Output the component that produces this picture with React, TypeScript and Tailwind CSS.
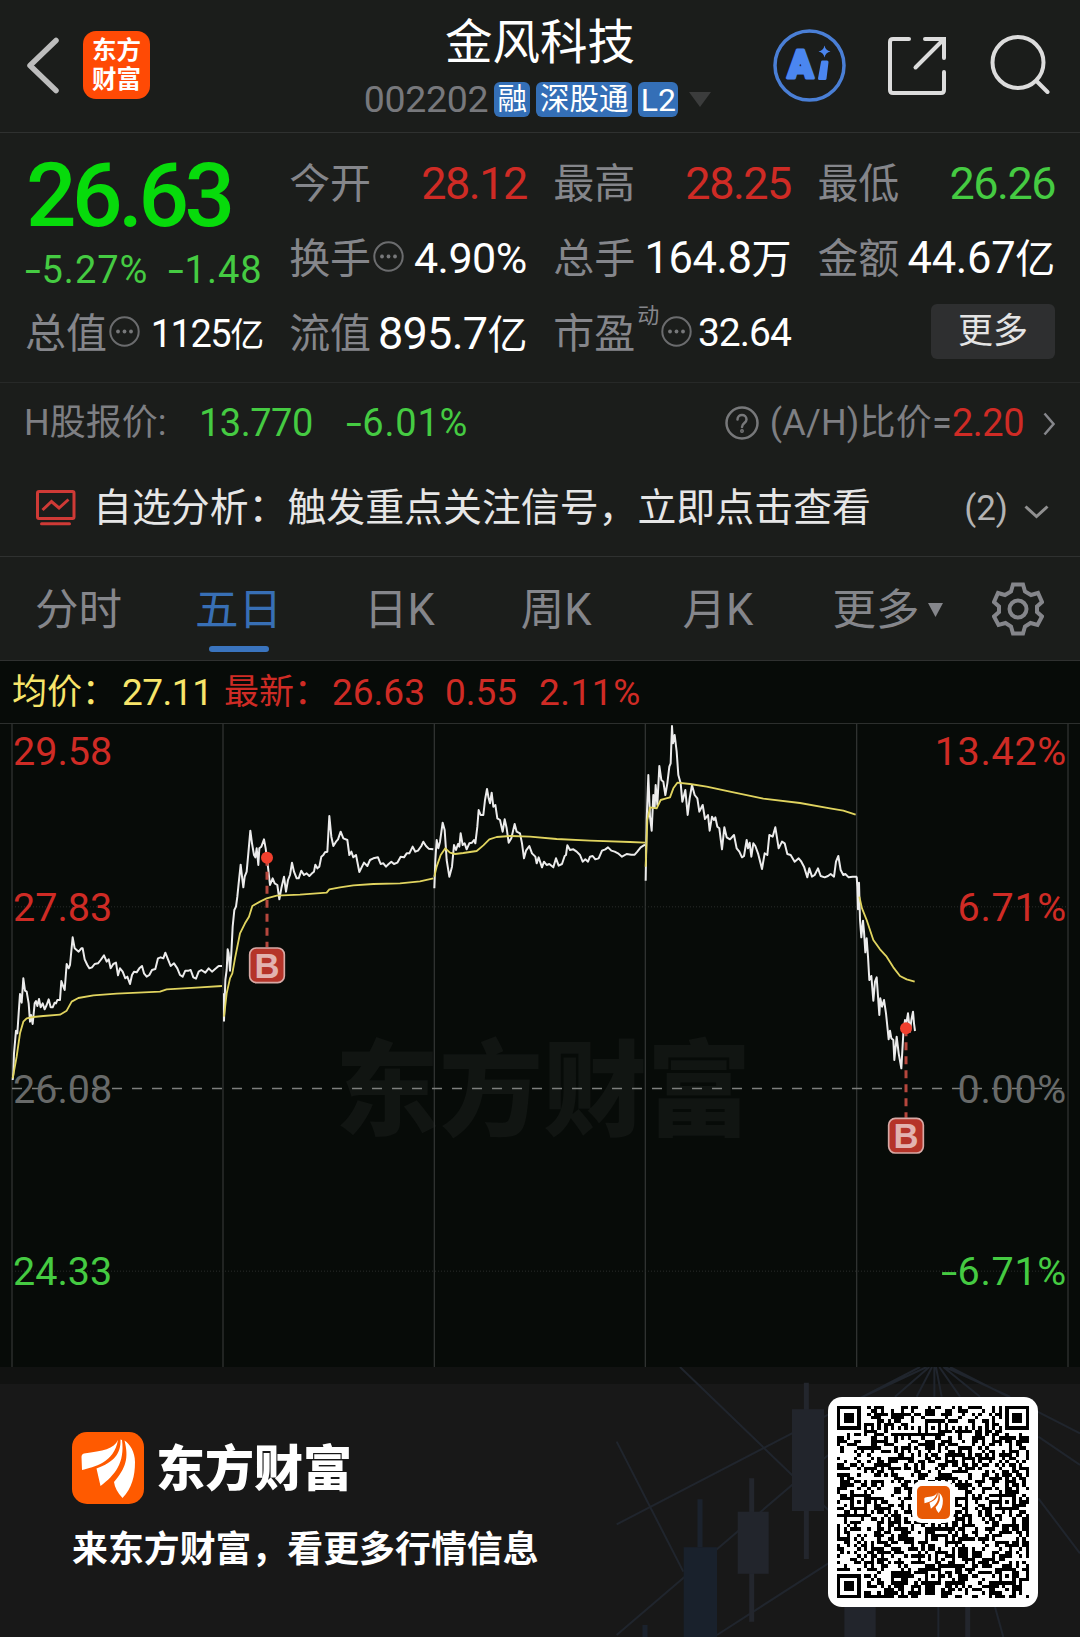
import type { ReactNode } from 'react';
import clsx from 'clsx';

const TABS = ['分时', '五日', '日K', '周K', '月K'];

// x,y pairs per trading day, in thirds of a pixel of the chart area
const SESSIONS = [
  {
    offset: [0, 0],
    price:
      '38,1080 40,1060 42,1000 48,932 52,940 56,880 60,822 65,848 70,775 75,812 80,815 86,850 90,905 93,885 98,912 104,850 108,843 112,858 117,837 122,862 128,850 134,868 140,855 146,838 152,862 158,862 164,848 168,850 172,840 180,840 184,783 190,800 194,810 200,732 206,745 210,735 218,652 224,685 230,690 236,695 244,685 248,685 254,718 262,735 268,745 276,742 284,732 294,730 302,720 312,706 320,725 326,718 332,745 340,732 348,728 354,766 360,745 368,755 376,775 382,770 390,792 396,765 402,755 410,757 418,745 426,738 432,760 440,770 448,765 456,750 466,747 474,715 482,712 490,715 496,698 504,718 512,738 522,730 532,745 540,765 548,770 556,752 566,752 572,750 580,772 588,776 596,755 604,750 616,758 626,745 636,755 648,745 656,738 666,738',
    average:
      '38,1075 50,1010 60,940 70,905 80,895 100,891 130,888 180,884 200,872 215,845 235,834 280,826 350,821 480,815 500,808 600,802 666,798',
  },
  {
    offset: [0, 0],
    price:
      '672,820 672,902 676,780 680,750 683,688 686,700 690,752 694,700 698,620 703,570 708,560 712,530 716,490 722,434 727,478 730,502 734,470 740,455 745,400 751,332 756,370 762,405 766,412 770,385 775,435 778,385 784,380 792,358 797,385 802,425 805,450 810,495 818,475 824,490 832,495 838,538 844,505 852,470 858,515 864,480 870,465 876,428 882,455 890,475 896,475 904,452 912,465 920,460 928,468 936,460 942,455 946,434 952,445 958,440 964,410 970,405 975,397 982,395 988,288 994,350 1000,378 1008,365 1014,358 1022,335 1030,355 1042,360 1048,405 1054,395 1060,412 1068,405 1078,456 1086,440 1092,428 1102,438 1110,420 1120,415 1134,412 1142,432 1150,430 1158,440 1166,432 1174,425 1182,432 1192,428 1202,410 1212,412 1220,400 1228,400 1238,380 1246,395 1254,392 1264,378 1270,365 1278,378 1286,386 1300,388',
    average:
      '672,890 680,820 690,775 697,760 705,715 720,640 735,610 747,590 757,558 780,545 800,535 830,527 900,524 980,518 988,508 1020,502 1060,496 1120,492 1200,490 1260,484 1300,475',
  },
  {
    offset: [1290, 0],
    price:
      '13,505 16,420 20,360 25,385 30,365 38,308 44,330 50,420 58,470 66,440 72,375 78,390 84,372 88,380 92,340 98,375 104,370 110,388 118,370 126,368 132,360 136,370 142,320 146,270 152,285 160,285 165,240 171,207 176,235 180,250 185,218 190,260 196,255 202,295 210,300 218,335 224,298 230,325 236,368 244,355 254,312 260,335 270,340 276,370 282,415 288,392 298,378 306,400 316,410 320,430 326,412 336,442 342,425 350,435 358,432 370,442 378,415 386,437 396,432 404,408 408,405 412,376 420,390 430,388 440,395 450,405 458,425 466,418 474,425 480,410 488,408 496,418 506,415 516,392 526,388 534,382 544,392 554,395 564,400 576,410 590,402 604,404 614,404 622,395 632,382 645,374',
    average:
      '13,470 20,440 32,405 46,385 60,398 75,402 100,399 140,393 160,376 178,358 200,351 240,348 300,350 380,357 480,362 600,366 645,368',
  },
  {
    offset: [1290, 0],
    price:
      '647,482 650,300 655,165 660,290 665,332 670,225 674,262 677,195 682,255 688,138 694,180 700,185 706,225 712,190 718,140 722,130 726,18 729,70 734,45 740,95 745,165 752,190 757,245 766,210 773,285 779,235 786,195 794,225 802,235 808,275 818,255 825,297 834,285 839,332 846,290 852,300 856,292 862,320 868,325 876,388 883,322 890,352 900,358 912,345 920,385 928,395 936,412 942,408 950,360 954,385 959,368 964,410 970,370 976,378 984,400 996,447 1004,400 1012,405 1018,345 1028,350 1036,322 1046,385 1056,365 1064,370 1072,402 1082,405 1094,425 1106,415 1114,425 1122,440 1132,472 1138,445 1146,470 1154,465 1164,445 1172,468 1184,472 1194,468 1202,462 1212,470 1218,425 1225,408 1232,450 1240,465 1246,462 1256,472 1268,470 1281,470',
    average:
      '647,440 652,300 660,262 680,265 692,240 706,236 720,232 730,205 742,188 780,192 830,200 900,215 1000,236 1110,249 1200,265 1240,272 1277,284',
  },
  {
    offset: [2520, 420],
    price:
      '50,50 52,80 54,148 57,68 60,180 64,232 69,182 72,215 76,277 80,235 84,290 88,360 94,348 100,422 105,365 110,352 118,465 121,415 126,440 132,420 138,460 146,538 150,512 154,535 160,540 163,600 170,530 176,580 184,625 190,520 195,480 199,490 204,460 210,515 214,480 219,455 222,490 225,513',
    average: '58,110 66,145 80,180 100,240 120,268 140,290 160,322 180,348 200,358 224,365',
  },
];

const TRADES = [
  { x: 801, y: 413, boxY: 682 },
  { x: 2718, y: 925, boxY: 1193 },
];

const QR_SIZE = 57;

function buildQr() {
  let seed = 20220;
  const rand = () => {
    seed = (seed * 1103515245 + 12345) % 2147483648;
    return seed / 2147483648;
  };
  const grid = Array.from({ length: QR_SIZE }, () =>
    Array.from({ length: QR_SIZE }, () => rand() > 0.5),
  );
  const last = QR_SIZE - 7;
  for (let i = 8; i < QR_SIZE - 8; i++) {
    grid[6][i] = i % 2 === 0;
    grid[i][6] = i % 2 === 0;
  }
  // finder patterns with their quiet ring
  [[0, 0], [last, 0], [0, last]].forEach(([cx, cy]) => {
    for (let y = -1; y <= 7; y++) {
      for (let x = -1; x <= 7; x++) {
        if (grid[cy + y]?.[cx + x] === undefined) continue;
        const d = Math.max(Math.abs(x - 3), Math.abs(y - 3));
        grid[cy + y][cx + x] = d !== 2 && d !== 4;
      }
    }
  });
  // alignment patterns
  [[28, 6], [6, 28], [28, 28], [50, 28], [28, 50], [50, 50]].forEach(([cx, cy]) => {
    for (let y = -2; y <= 2; y++) {
      for (let x = -2; x <= 2; x++) {
        grid[cy + y][cx + x] = Math.max(Math.abs(x), Math.abs(y)) !== 1;
      }
    }
  });
  return grid
    .flatMap((row, y) => row.map((on, x) => (on ? `M${x} ${y}h1v1h-1z` : '')))
    .join('');
}

const QR_PATH = buildQr();

function BrandMark({ className }: { className: string }) {
  return (
    <svg viewBox="0 0 72 72" className={className}>
      <path d="M46 8C42 17 31 19 12 21.500Q9.500 22 9.500 25L10 38C22 35 42 31 46 8Z" fill="#fff" />
      <path d="M48.500 7.500C49 22 42 30 24.500 36.500L28.500 54C43 43 53 31 50 8Z" fill="#fff" />
      <path d="M52.500 8.500C57 26 54 36 42 50Q43 58 50.500 66C60 56 63 44 63 30C63 20 58 12 52.500 8.500Z" fill="#fff" />
    </svg>
  );
}

function MoreDots() {
  return (
    <svg width="31" height="31" viewBox="0 0 31 31" className="mb-[4px] shrink-0">
      <circle cx="15.500" cy="15.500" r="14.200" fill="none" stroke="#6b6c6e" strokeWidth="2" />
      <circle cx="9" cy="15.500" r="1.900" fill="#77787a" />
      <circle cx="15.500" cy="15.500" r="1.900" fill="#77787a" />
      <circle cx="22" cy="15.500" r="1.900" fill="#77787a" />
    </svg>
  );
}

// negative number with a wide minus
function Signed({ value }: { value: string }) {
  if (!value.startsWith('-')) return <>{value}</>;
  return (
    <>
      <span className="mr-[5px] inline-block origin-left scale-x-150">-</span>
      {value.slice(1)}
    </>
  );
}

function Stat({ label, dots, children }: { label: string; dots?: boolean; children: ReactNode }) {
  return (
    <div className="flex h-[75px] items-center justify-between whitespace-nowrap">
      <div className="flex items-center gap-[2px]">
        <span className="pt-[2px] text-[41px] text-[#85868b]">{label}</span>
        {dots && <MoreDots />}
      </div>
      {children}
    </div>
  );
}

function Header() {
  return (
    <header className="grid h-[133px] grid-cols-[1fr_auto_1fr] border-b border-[#2f3130]">
      <div className="flex items-start pt-[31px] pl-[26px]">
        <svg width="34" height="68" viewBox="0 0 34 68" className="mr-[23px]">
          <path d="M30 9.500L4 34.500L30 59.500" fill="none" stroke="#bdbdbd" strokeWidth="5.500" strokeLinecap="round" strokeLinejoin="round" />
        </svg>
        <div className="flex h-[68px] w-[67px] flex-col items-center justify-center rounded-[13px] bg-[#ff4a05] text-[24.5px] leading-[29px] font-bold text-white">
          <span>东方</span>
          <span>财富</span>
        </div>
      </div>
      <div className="flex flex-col items-center pt-[14px]">
        <h1 className="text-[47.5px] leading-[58px] text-white">金风科技</h1>
        <div className="mt-[10px] flex h-[35px] items-center gap-[6px] pr-[5px] text-[29.5px] text-white">
          <span className="text-[37.5px] tracking-[-0.300px] text-[#77787c]">002202</span>
          <span className="flex h-[35px] w-[36px] items-center justify-center rounded-[6px] bg-[#346fb7] pt-px">融</span>
          <span className="flex h-[35px] w-[96px] items-center justify-center rounded-[6px] bg-[#346fb7] pt-px">深股通</span>
          <span className="flex h-[35px] w-[40px] items-center justify-center rounded-[6px] bg-[#346fb7] text-[32px]">L2</span>
          <svg width="22" height="15" viewBox="0 0 22 15" className="ml-[5px]">
            <path d="M0 0H22L11 15Z" fill="#3b3c3c" />
          </svg>
        </div>
      </div>
      <div className="flex items-start justify-end pt-[29px] pr-[30px]">
        <svg width="73" height="73" viewBox="0 0 73 73" className="mr-[42px]">
          <circle cx="36.500" cy="36.500" r="34.500" fill="none" stroke="#4a7fd6" strokeWidth="3.500" />
          <g fill="#4b86f0" stroke="#4b86f0" strokeLinejoin="round">
            <text x="14.500" y="49" strokeWidth="3" className="text-[38px] font-black">
              A
            </text>
            <path d="M49.500 33H54L52 49.500H46.500Z" strokeWidth="3" />
          </g>
          <path d="M51.500 16.500Q52.500 21.500 57.500 22.500Q52.500 23.500 51.500 28.500Q50.500 23.500 45.500 22.500Q50.500 21.500 51.500 16.500Z" fill="#4b86f0" />
        </svg>
        <svg width="58" height="58" viewBox="0 0 58 58" className="mt-[7.500px] mr-[44px]" fill="none" stroke="#dcdcdc" strokeWidth="4" strokeLinecap="round">
          <path d="M21 2H5Q2 2 2 5V53Q2 56 5 56H53Q56 56 56 53V35" />
          <path d="M37 2H56V21M55 3L27.500 30.500" />
        </svg>
        <svg width="60" height="60" viewBox="0 0 60 60" className="mt-[5px]" fill="none" stroke="#dcdcdc" strokeWidth="4" strokeLinecap="round">
          <circle cx="28" cy="28.500" r="25.500" />
          <path d="M46.500 47L57.500 58" />
        </svg>
      </div>
    </header>
  );
}

function Quote() {
  return (
    <section className="grid h-[250px] grid-cols-4 gap-x-[26.500px] border-b border-[#272928] px-[25px] pt-[13px]">
      <div>
        <div className="flex h-[98px] items-center pl-[1px] text-[89px] font-medium tracking-[-4.500px] text-[#07db0b]">26.63</div>
        <div className="flex h-[52px] items-center justify-between text-[38px] tracking-[1px] text-[#45cb42]">
          <span><Signed value="-5.27%" /></span>
          <span><Signed value="-1.48" /></span>
        </div>
        <Stat label="总值" dots>
          <span className="text-[38px] tracking-[-1.500px] text-white">1125<span className="text-[34px]">亿</span></span>
        </Stat>
      </div>
      <div>
        <Stat label="今开">
          <span className="text-[45px] tracking-[-1.500px] text-[#cf2b25]">28.12</span>
        </Stat>
        <Stat label="换手" dots>
          <span className="text-[43px] tracking-[-0.500px] text-white">4.90%</span>
        </Stat>
        <Stat label="流值">
          <span className="text-[45px] tracking-[-0.700px] text-white">895.7<span className="text-[40px]">亿</span></span>
        </Stat>
      </div>
      <div>
        <Stat label="最高">
          <span className="text-[45px] tracking-[-1.500px] text-[#cf2b25]">28.25</span>
        </Stat>
        <Stat label="总手">
          <span className="text-[43.5px] tracking-[-0.500px] text-white">164.8<span className="text-[40px]">万</span></span>
        </Stat>
        <div className="flex h-[75px] items-center text-[41px] text-[#85868b]">
          <span className="pt-[2px]">市盈</span>
          <sup className="top-0 -mt-[36px] mr-[2px] ml-[2px] text-[22px]">动</sup>
          <MoreDots />
          <span className="ml-auto text-[39px] tracking-[-1px] text-white">32.64</span>
        </div>
      </div>
      <div>
        <Stat label="最低">
          <span className="text-[45px] tracking-[-1.500px] text-[#45cb42]">26.26</span>
        </Stat>
        <Stat label="金额">
          <span className="text-[43.5px] tracking-[-0.300px] text-white">44.67<span className="text-[40px]">亿</span></span>
        </Stat>
        <div className="flex h-[75px] items-center justify-end pb-[4px]">
          <button className="flex h-[55px] w-[124px] items-center justify-center rounded-[6px] bg-[#2e2f30] text-[35px] text-[#e4e4e4]">更多</button>
        </div>
      </div>
    </section>
  );
}

function HShareRow() {
  return (
    <section className="flex h-[78px] items-center pt-[2px] pr-[25px] pl-[24px] text-[36px] whitespace-nowrap text-[#7e7f83]">
      <span className="w-[175px]">H股报价:</span>
      <span className="w-[147px] text-[38px] tracking-[-0.500px] text-[#45cb42]">13.770</span>
      <span className="text-[38px] tracking-[0.800px] text-[#45cb42]"><Signed value="-6.01%" /></span>
      <svg width="34" height="34" viewBox="0 0 34 34" className="mr-[11px] ml-auto" fill="none" stroke="#77787a" strokeWidth="2.500">
        <circle cx="17" cy="17" r="15.500" />
        <path d="M12.500 13.500C12.500 7.500 21.500 7.500 21.500 13.500C21.500 17 17 17 17 21" strokeLinecap="round" />
        <circle cx="17" cy="25" r="0.700" />
      </svg>
      <span className="tracking-[0.200px]">(A/H)比价=</span>
      <span className="text-[38px] tracking-[-0.500px] text-[#cf2b25]">2.20</span>
      <svg width="12" height="24" viewBox="0 0 12 24" className="mt-[2px] ml-[19px]">
        <path d="M1.500 1.500L10.500 12L1.500 22.500" fill="none" stroke="#85868b" strokeWidth="2.500" />
      </svg>
    </section>
  );
}

function AnalysisRow() {
  return (
    <section className="flex h-[96px] items-center border-b border-[#2f3130] pr-[31px] pl-[36px] whitespace-nowrap">
      <svg width="40" height="36" viewBox="0 0 40 36" className="mr-[17px] mb-[1px]" fill="none" stroke="#cf3a36" strokeWidth="3">
        <rect x="1.500" y="1.500" width="36.500" height="27" rx="1.500" />
        <path d="M6.500 20L15.500 11.500L23 18L32.500 9.500" />
        <path d="M5.500 33.800H33.500" strokeLinecap="round" />
      </svg>
      <span className="text-[38.9px] text-[#e6e6e6]">自选分析：触发重点关注信号，立即点击查看</span>
      <span className="ml-auto text-[35px] text-[#b3b3b3]">(2)</span>
      <svg width="25" height="14" viewBox="0 0 25 14" className="mt-[6px] ml-[16px]">
        <path d="M1.500 1.500L12.500 11.500L23.500 1.500" fill="none" stroke="#909090" strokeWidth="3" />
      </svg>
    </section>
  );
}

function Tabs() {
  return (
    <nav className="flex h-[104px] items-start border-b border-[#2f3130] pl-[35px] text-[43.5px] whitespace-nowrap text-[#85868b]">
      {TABS.map((tab) => (
        <div
          key={tab}
          className={clsx(
            'flex h-full shrink-0 flex-col items-center pt-[21px] leading-[66px]',
            tab === '分时' && 'mr-[73px]',
            tab === '五日' && 'mr-[82px] text-[#386fb5]',
            tab === '日K' && 'mr-[86px]',
            tab === '周K' && 'mr-[91px]',
            tab === '月K' && 'mr-[79px]',
          )}
        >
          {tab}
          {tab === '五日' && <span className="mt-[2px] h-[6px] w-[60px] rounded-full bg-[#3a74be]" />}
        </div>
      ))}
      <div className="flex items-center pt-[21px] leading-[66px]">
        更多
        <svg width="15" height="14" viewBox="0 0 15 14" className="mb-[3px] ml-[9px]">
          <path d="M0 0H15L7.500 14Z" fill="#85868b" />
        </svg>
      </div>
      <svg width="52" height="54" viewBox="0 0 52 54" className="mt-[25px] ml-[49px]" fill="none" stroke="#85868b" strokeWidth="4">
        <path d="M21 2.500H31L33 9.500L39 13L46 11L50 20L45 24.500V30L50 34.500L45.500 43L38.500 41L33 44.500L31 51.500H21L19 44.500L13.500 41L6.500 43L2 34.500L7 30V24.500L2 20L6 11L13 13L19 9.500Z" />
        <circle cx="26" cy="27" r="8.500" />
      </svg>
    </nav>
  );
}

function AxisRow({ className, left, right }: { className: string; left: string; right: string }) {
  return (
    <div className={clsx('absolute inset-x-0 flex h-[40px] items-center justify-between pr-[13px] pl-[13px] text-[39.5px]', className)}>
      <span>{left}</span>
      <span className="tracking-[0.700px]"><Signed value={right} /></span>
    </div>
  );
}

function Chart() {
  return (
    <section className="bg-[#070b08]">
      <div className="flex h-[59px] items-center pt-[3px] pl-[12px] text-[35px] whitespace-nowrap">
        <span className="w-[110px] text-[#f7e56a]">均价：</span>
        <span className="w-[102px] text-[37px] tracking-[-0.500px] text-[#f7e56a]">27.11</span>
        <span className="w-[108px] text-[#cf2b25]">最新：</span>
        <span className="w-[113px] text-[37px] text-[#cf2b25]">26.63</span>
        <span className="w-[94px] text-[37px] text-[#cf2b25]">0.55</span>
        <span className="text-[37px] tracking-[0.500px] text-[#cf2b25]">2.11%</span>
      </div>
      <div className="relative h-[647px]">
        <div className="absolute top-[308px] left-[335px] text-[104px] leading-[130px] font-black text-[#111512]">东方财富</div>
        <svg viewBox="0 0 3240 1941" className="absolute inset-0 h-[647px] w-[1080px]" fill="none">
          <path d="M0 10.500H3240" stroke="#2c2f2d" strokeWidth="3" />
          <path d="M36 10V1941M669 10V1941M1303 10V1941M1936 10V1941M2570 10V1941M3204 10V1941" stroke="#2f3230" strokeWidth="4" />
          <path d="M36 560.500H3204M36 1653.500H3204" stroke="#2a2d2b" strokeWidth="3" strokeDasharray="3 6" />
          <path d="M36 1105.500H3204" stroke="#7d7f7d" strokeWidth="5" strokeDasharray="30 30" />
          {SESSIONS.map((s, i) => (
            <g key={i} transform={`translate(${s.offset[0]} ${s.offset[1]})`} strokeLinejoin="round">
              <polyline points={s.price} stroke="#ececec" strokeWidth="6" />
              <polyline points={s.average} stroke="#e0d45f" strokeWidth="5.500" />
            </g>
          ))}
        </svg>
        <AxisRow className="top-[12px] text-[#cf2b25]" left="29.58" right="13.42%" />
        <AxisRow className="top-[168px] text-[#cf2b25]" left="27.83" right="6.71%" />
        <AxisRow className="top-[350px] text-[#686a69]" left="26.08" right="0.00%" />
        <AxisRow className="top-[532px] text-[#45cb42]" left="24.33" right="-6.71%" />
        <svg viewBox="0 0 3240 1941" className="absolute inset-0 h-[647px] w-[1080px]">
          {TRADES.map((t) => (
            <g key={t.x}>
              <path d={`M${t.x} ${t.y}V${t.boxY}`} stroke="#b5473d" strokeWidth="9" strokeDasharray="24 18" />
              <circle cx={t.x} cy={t.y} r="18" fill="#f0402e" />
              <rect x={t.x - 52} y={t.boxY + 2} width="104" height="104" rx="20" fill="#b53429" stroke="#d8a9a5" strokeWidth="5" />
              <text x={t.x} y={t.boxY + 91} textAnchor="middle" fill="#e2b3b0" className="font-['Liberation_Sans'] text-[104px] font-bold">
                B
              </text>
            </g>
          ))}
        </svg>
      </div>
    </section>
  );
}

function Footer() {
  return (
    <footer className="relative flex h-[270px] justify-between bg-[#181818] pl-[72px]">
      <div className="absolute inset-x-0 top-0 h-[17px] bg-[#111211]" />
      <svg viewBox="0 51 1500 810" className="absolute top-0 right-0 h-[270px] w-[500px]" fill="none">
        <path
          d="M300 51L745 480M110 275L310 665M110 523L636 250L1020 51M110 855L636 405L745 315M411 855L745 640M1110 51L1500 250M1375 260L1500 345M1375 445L1500 610M1040 51L850 140M1048 51L945 140M1056 51L1010 140M1063 51V140M1068 51L1085 140M1078 51L1140 140M1090 51L1200 140M1095 51L1290 140M1075 771V861M1245 771L1270 861"
          stroke="#20252d"
          strokeWidth="6"
        />
        <path d="M679 98V627M515 385V815M1163 771V861" stroke="#23262d" strokeWidth="15" />
        <path d="M636 178h96v305h-96zM473 485h93v186h-93zM793 771h94v90h-94z" fill="#22252c" />
        <path d="M360 448V592M195 825V861" stroke="#1b222d" strokeWidth="15" />
        <path d="M311 592h100v269h-100z" fill="#19212c" />
      </svg>
      <div className="relative pt-[63px]">
        <div className="flex items-center gap-[12px]">
          <BrandMark className="h-[72px] w-[72px] rounded-[15px] bg-[#ff5a00]" />
          <span className="pt-[4px] text-[49px] leading-[72px] font-black text-white">东方财富</span>
        </div>
        <p className="mt-[19px] text-[35.9px] leading-[50px] font-bold text-white">来东方财富，看更多行情信息</p>
      </div>
      <div className="relative mt-[30px] mr-[42px] flex h-[210px] w-[210px] items-center justify-center rounded-[14px] bg-white">
        <svg width="192" height="192" viewBox="0 0 57 57" shapeRendering="crispEdges">
          <path d={QR_PATH} fill="#000" />
        </svg>
        <div className="absolute top-[84px] left-[84px] flex h-[42px] w-[42px] items-center justify-center rounded-[9px] bg-white">
          <BrandMark className="h-[33px] w-[33px] rounded-[5px] bg-[#e85a05] p-[4px]" />
        </div>
      </div>
    </footer>
  );
}

export default function App() {
  return (
    <main className="w-[1080px] overflow-hidden bg-[#1b1d1b] font-[Roboto,'Noto_Sans_CJK_SC',sans-serif] leading-none">
      <Header />
      <Quote />
      <HShareRow />
      <AnalysisRow />
      <Tabs />
      <Chart />
      <Footer />
    </main>
  );
}
